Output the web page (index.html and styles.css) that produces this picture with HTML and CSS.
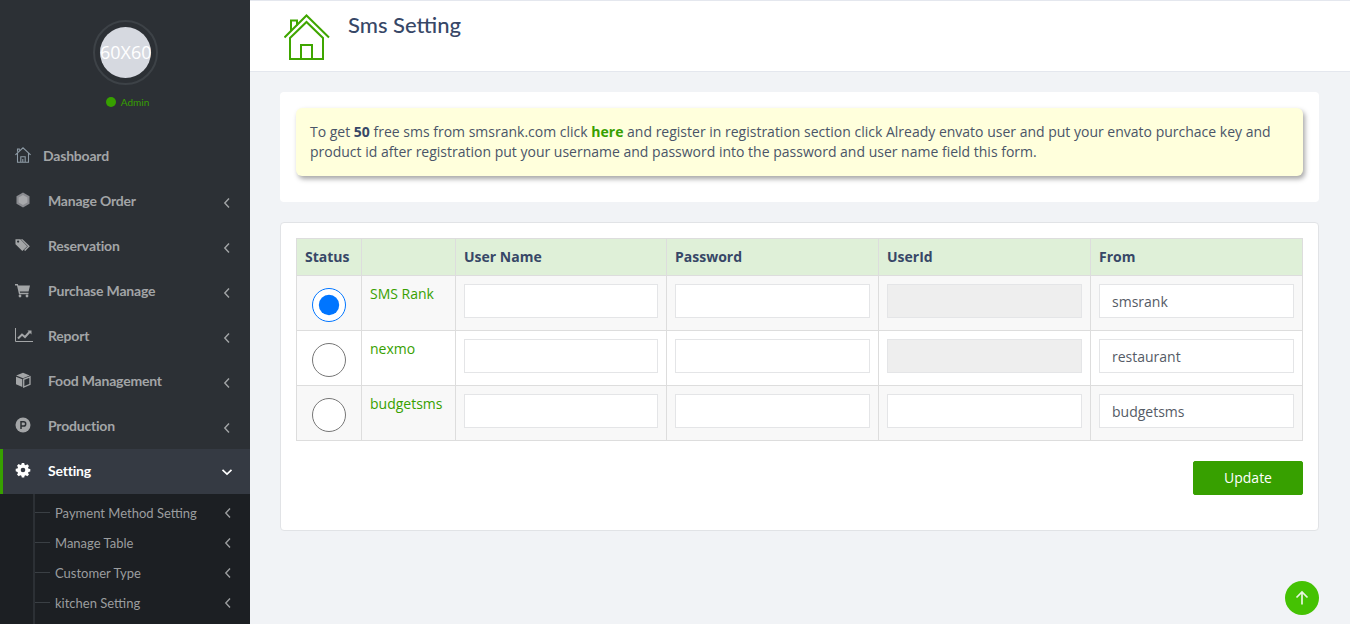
FILE: index.html
```html
<!DOCTYPE html>
<html lang="en">
<head>
<meta charset="utf-8">
<title>Sms Setting</title>
<link rel="stylesheet" href="styles.css">
</head>
<body>
<div class="app">
  <aside class="sidebar">
    <div class="profile">
      <div class="avatar-ring"><div class="avatar">60X60</div></div>
      <div class="role"><span class="dot"></span>Admin</div>
    </div>
    <nav class="menu">
      <a class="item item-home"><svg class="ico" viewBox="0 0 16 16" fill="none" stroke="currentColor" stroke-width="1.100"><path d="M.4 7.800 8 .8l7.600 7M2.500 6.200V15.300h11V6.200M5.800 15.300V9.800h4.400v5.500M7.800 15.300V12M2.500 4.800V2h1.800v1.300"/></svg><span class="label">Dashboard</span></a>
      <a class="item"><svg class="ico" viewBox="0 0 16 16"><path fill="#8a8b90" d="M8 .6l6.500 3.700v7.400L8 15.400l-6.500-3.700V4.300z"/><path fill="#a8a9ac" d="M8 3l4.400 2.500v5L8 13l-4.400-2.500v-5z"/></svg><span class="label">Manage Order</span><svg class="chev" viewBox="0 0 8 12"><path d="M6 1.500 1.800 6 6 10.500"/></svg></a>
      <a class="item"><svg class="ico" viewBox="0 0 17 16" fill="currentColor"><path d="M.5 2v5.200L7.800 14.500 13 9.300 5.700 2zM3.300 5.600a1.200 1.200 0 1 1 0-2.400 1.200 1.200 0 0 1 0 2.400z"/><path d="M8 2l7.800 7.400-5 5-1.200-1 4-4.100L6.200 2z"/></svg><span class="label">Reservation</span><svg class="chev" viewBox="0 0 8 12"><path d="M6 1.500 1.800 6 6 10.500"/></svg></a>
      <a class="item"><svg class="ico" viewBox="0 0 16 16" fill="currentColor"><path d="M0 2h2.800l.5 1.500H15l-1.400 6H4.800l.3 1.300h8.400v1.400H4L2 3.400H0z"/><circle cx="5" cy="14" r="1.400"/><circle cx="12" cy="14" r="1.400"/></svg><span class="label">Purchase Manage</span><svg class="chev" viewBox="0 0 8 12"><path d="M6 1.500 1.800 6 6 10.500"/></svg></a>
      <a class="item"><svg class="ico ico-wide" viewBox="0 0 18 14" fill="none" stroke="currentColor"><path d="M.5 0v13.500H18" stroke-width="1"/><path d="M3 10.500 7 6.500l3 2.500 5-5.500" stroke-width="2"/><path d="M12.500 2.500H16.500V6.500z" fill="currentColor" stroke="none"/></svg><span class="label">Report</span><svg class="chev" viewBox="0 0 8 12"><path d="M6 1.500 1.800 6 6 10.500"/></svg></a>
      <a class="item"><svg class="ico" viewBox="0 0 16 16" fill="currentColor"><path d="M8 .8 14.800 3.500 8 6.200 1.200 3.500z"/><path d="M1 4.800 7.300 7.300V15L1 12.300z"/><path d="M15 4.800 8.700 7.300V15l6.300-2.700z" fill="none" stroke="currentColor" stroke-width="1.300"/></svg><span class="label">Food Management</span><svg class="chev" viewBox="0 0 8 12"><path d="M6 1.500 1.800 6 6 10.500"/></svg></a>
      <a class="item"><svg class="ico" viewBox="0 0 16 16"><circle cx="8" cy="8" r="7.500" fill="currentColor"/><path d="M6 12V4.800h2.600a2.100 2.100 0 0 1 0 4.200H6" fill="none" stroke="#2c3035" stroke-width="1.500"/></svg><span class="label">Production</span><svg class="chev" viewBox="0 0 8 12"><path d="M6 1.500 1.800 6 6 10.500"/></svg></a>
      <a class="item active"><svg class="ico" viewBox="0 0 16 16"><path fill="currentColor" d="M6.800 1h2.400l.4 1.800 1.100.5 1.600-1 1.700 1.700-1 1.600.5 1.100 1.800.4v2.400l-1.800.4-.5 1.100 1 1.600-1.700 1.700-1.600-1-1.100.5-.4 1.800H6.800l-.4-1.800-1.100-.5-1.600 1-1.700-1.700 1-1.600-.5-1.100L.7 9.200V6.800l1.800-.4.500-1.100-1-1.600 1.700-1.700 1.600 1 1.100-.5z"/><circle cx="8" cy="8" r="2.300" fill="#353a43"/></svg><span class="label">Setting</span><svg class="chev chev-down" viewBox="0 0 12 8"><path d="M1.500 1.800 6 6l4.500-4.200"/></svg></a>
      <div class="submenu">
        <a class="subitem"><span class="sublabel">Payment Method Setting</span><svg class="chev" viewBox="0 0 8 12"><path d="M6 1.500 1.800 6 6 10.500"/></svg></a>
        <a class="subitem"><span class="sublabel">Manage Table</span><svg class="chev" viewBox="0 0 8 12"><path d="M6 1.500 1.800 6 6 10.500"/></svg></a>
        <a class="subitem"><span class="sublabel">Customer Type</span><svg class="chev" viewBox="0 0 8 12"><path d="M6 1.500 1.800 6 6 10.500"/></svg></a>
        <a class="subitem"><span class="sublabel">kitchen Setting</span><svg class="chev" viewBox="0 0 8 12"><path d="M6 1.500 1.800 6 6 10.500"/></svg></a>
      </div>
    </nav>
  </aside>
  <main class="main">
    <header class="page-head">
      <svg class="head-ico" viewBox="0 0 46 46" fill="none" stroke="#3fa600" stroke-width="2"><path d="M.5 23.500 22.500 1.500l22.500 22"/><path d="M6 45V24L22.500 8 39 24V45z"/><path d="M17 45V31H28V45"/><path d="M7 17V6.500H13V11.500"/></svg>
      <h1 class="page-title">Sms Setting</h1>
    </header>
    <div class="content">
      <section class="panel notice-panel">
        <div class="notice">To get <b>50</b> free sms from smsrank.com click <a class="here">here</a> and register in registration section click Already envato user and put your envato purchace key and product id after registration put your username and password into the password and user name field this form.</div>
      </section>
      <section class="panel form-panel">
        <table class="grid">
          <colgroup><col class="c1"><col class="c2"><col class="c3"><col class="c4"><col class="c4"><col></colgroup>
          <thead>
            <tr><th>Status</th><th></th><th>User Name</th><th>Password</th><th>UserId</th><th>From</th></tr>
          </thead>
          <tbody>
            <tr class="odd">
              <td class="radio-cell"><input class="radio" type="radio" name="gw" checked></td>
              <td class="name">SMS Rank</td>
              <td><input class="field" type="text"></td>
              <td><input class="field" type="text"></td>
              <td><input class="field" type="text" disabled></td>
              <td><input class="field" type="text" value="smsrank"></td>
            </tr>
            <tr>
              <td class="radio-cell"><input class="radio" type="radio" name="gw"></td>
              <td class="name">nexmo</td>
              <td><input class="field" type="text"></td>
              <td><input class="field" type="text"></td>
              <td><input class="field" type="text" disabled></td>
              <td><input class="field" type="text" value="restaurant"></td>
            </tr>
            <tr class="odd">
              <td class="radio-cell"><input class="radio" type="radio" name="gw"></td>
              <td class="name">budgetsms</td>
              <td><input class="field" type="text"></td>
              <td><input class="field" type="text"></td>
              <td><input class="field" type="text"></td>
              <td><input class="field" type="text" value="budgetsms"></td>
            </tr>
          </tbody>
        </table>
        <div class="actions"><button class="btn" type="button">Update</button></div>
      </section>
    </div>
    <a class="to-top"><svg viewBox="0 0 16 16" fill="none" stroke="#e8f5e0" stroke-width="1.700"><path d="M8 14.500V2M2.500 7.500 8 2l5.500 5.500"/></svg></a>
  </main>
</div>
</body>
</html>
```

FILE: styles.css
```css
* { box-sizing: border-box; }
html, body { margin: 0; height: 624px; overflow: hidden; }
body { font-family: "Open Sans", sans-serif; font-size: 14px; color: #374767; background: #f1f3f6; }
.app { display: flex; height: 624px; }

.sidebar { width: 250px; flex: none; background: #2c3035; overflow: hidden; }
.profile { height: 134px; padding-top: 20px; display: flex; flex-direction: column; align-items: center; }
.avatar-ring { width: 65px; height: 65px; border: 2px solid #3d4247; border-radius: 50%; padding: 5px; margin-left: 1px; }
.avatar { width: 51px; height: 51px; border-radius: 50%; background: #d6d9e0; color: #fff; font-size: 18px; line-height: 51px; text-align: center; white-space: nowrap; overflow: hidden; }
.role { margin-top: 10px; margin-left: 5px; display: flex; align-items: center; font-family: "Lato", sans-serif; font-size: 10px; line-height: 14px; color: #37a000; }
.dot { width: 10px; height: 10px; border-radius: 50%; background: #37a000; margin-right: 5px; }

.menu { display: flex; flex-direction: column; }
.item { height: 45px; padding: 0 19px 0 15px; display: flex; align-items: center; color: #a3a5a7; font-family: "Lato", sans-serif; font-size: 14px; font-weight: 700; }
.item .label { flex: 1; margin-left: 17px; letter-spacing: -.2px; padding-bottom: 2px; }
.item-home .label { margin-left: 12px; }
.ico { width: 16px; height: 16px; flex: none; margin-top: -4px; }
.ico-wide { width: 18px; margin-right: -2px; }
.item-home .ico { color: #8d9aa5; }
.chev { width: 8px; height: 12px; flex: none; fill: none; stroke: currentColor; stroke-width: 1.400; margin-top: 2px; }
.chev-down { width: 12px; height: 8px; margin: 1px -2px 0 -2px; stroke-width: 1.700; }
.active { background: #353a43; border-left: 3px solid #37a000; padding-left: 12px; color: #fff; }

.submenu { background: #1c1f23; padding: 4px 0 30px; position: relative; }
.submenu::before { content: ""; position: absolute; left: 33px; top: 0; bottom: 0; width: 2px; background: #2c3035; }
.subitem { height: 30px; padding: 0 18px 0 55px; display: flex; align-items: center; color: #9b9d9f; font-family: "Lato", sans-serif; font-size: 13px; position: relative; }
.subitem::before { content: ""; position: absolute; left: 35px; top: 14px; width: 15px; height: 1px; background: #3a3f44; }
.sublabel { flex: 1; }
.subitem .chev { margin-top: 0; }

.main { flex: 1; min-width: 0; position: relative; }
.page-head { height: 72px; background: #fff; border-top: 1px solid #e4e7ee; border-bottom: 1px solid #e4e7ee; padding: 13px 0 0 34px; display: flex; align-items: flex-start; }
.head-ico { width: 46px; height: 46px; flex: none; }
.page-title { margin: -2px 0 0 18px; font-family: "Lato", sans-serif; font-size: 22px; line-height: 25px; font-weight: 500; color: #374767; }

.content { padding: 20px 31px 0 30px; display: flex; flex-direction: column; gap: 20px; }
.panel { background: #fff; border-radius: 4px; }
.notice-panel { height: 110px; padding: 16px 16px 0; }
.notice { height: 68px; padding: 14px 14px; background: #ffffdc; border-radius: 6px; box-shadow: 2px 3px 5px rgba(0,0,0,.35); line-height: 20px; color: #4a5568; }
.notice b { color: #374767; }
.here { color: #37a000; font-weight: 700; }

.form-panel { height: 309px; border: 1px solid #e1e3e6; padding: 15px; }
.grid { width: 1007px; table-layout: fixed; border-collapse: collapse; border: 1px solid #ddd; }
.c1 { width: 65px; }
.c2 { width: 94px; }
.c3 { width: 211px; }
.c4 { width: 212px; }
.grid th, .grid td { border: 1px solid #ddd; padding: 8px; vertical-align: top; }
.grid th { height: 37px; padding-top: 8px; padding-bottom: 8px; background: #dff0d8; border-bottom: 0; text-align: left; font-weight: 700; line-height: 20px; }
.grid td { height: 55px; }
.grid tbody tr.odd td { background: #f8f8f8; }
.name { color: #37a000; line-height: 20px; }
.grid td.radio-cell { padding: 0; }
.radio { display: block; width: 34px; height: 34px; margin: 12px 0 0 15px; }
.field { display: block; width: 100%; height: 34px; border: 1px solid #e4e5e7; background: #fff; padding: 0 12px; font-family: inherit; font-size: 14px; color: #555b66; border-radius: 0; outline: 0; }
.field:disabled { background: #eee; }
.actions { display: flex; justify-content: flex-end; margin-top: 20px; }
.btn { width: 110px; height: 34px; border: 1px solid #37a000; border-radius: 2px; background: #37a000; color: #fff; font-family: inherit; font-size: 14px; font-weight: 400; padding: 0 0 2px; }

.to-top { position: absolute; left: 1035px; top: 581px; width: 34px; height: 34px; border-radius: 50%; background: #45c203; display: flex; align-items: center; justify-content: center; }
.to-top svg { width: 16px; height: 16px; }
```
